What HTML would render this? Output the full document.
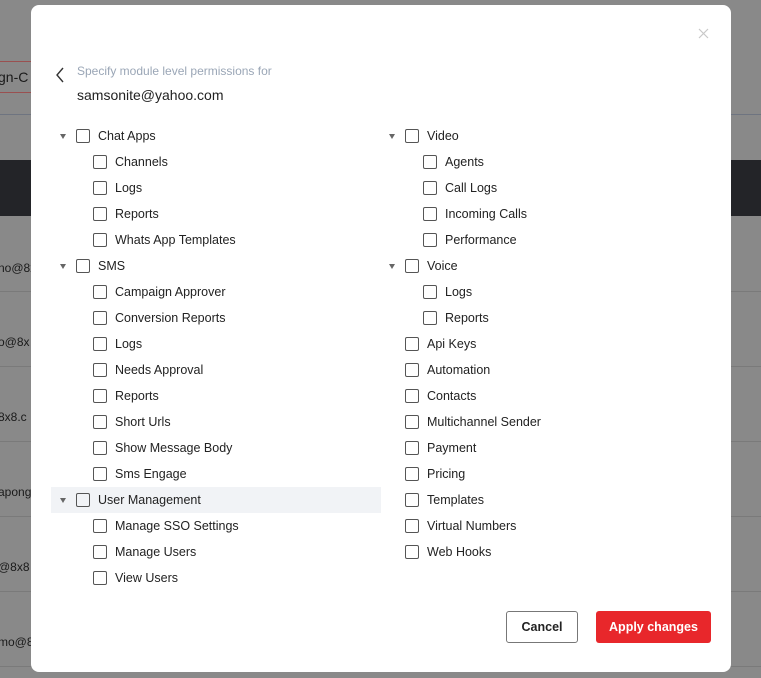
<!DOCTYPE html>
<html><head><style>
*{margin:0;padding:0;box-sizing:border-box}
body{width:761px;height:678px;background:#898989;position:relative;overflow:hidden;font-family:"Liberation Sans",sans-serif;color:#222}
.bgline{position:absolute;left:0;width:761px;height:1px;background:#7a7a7a}
.bgt{position:absolute;left:-2px;font-size:12px;color:#1a1a1a}
.modal{position:absolute;left:31px;top:5px;width:700px;height:667px;background:#fff;border-radius:8px}
.it{position:absolute;height:26px;display:flex;align-items:center;font-size:12.5px;color:#222}
.cb{width:14px;height:14px;border:1px solid #555;border-radius:2px;margin-right:8px;flex:none}
.tg{position:absolute;width:0;height:0;border-left:3.5px solid transparent;border-right:3.5px solid transparent;border-top:5px solid #666}
</style></head><body>
<div style="position:absolute;left:-5px;top:61px;width:90px;height:32px;border:1px solid #9a5050;border-left:none"></div>
<div class="bgt" style="top:69px;font-size:14px">gn-C</div>
<div class="bgline" style="top:114px;background:#6e7480"></div>
<div style="position:absolute;left:0;top:160px;width:761px;height:56px;background:#232428"></div>
<div class="bgline" style="top:291px"></div><div class="bgline" style="top:366px"></div><div class="bgline" style="top:441px"></div><div class="bgline" style="top:516px"></div><div class="bgline" style="top:591px"></div><div class="bgline" style="top:666px"></div>
<div class="bgt" style="top:261px">no@8x</div>
<div class="bgt" style="top:335px">o@8x</div>
<div class="bgt" style="top:410px">8x8.c</div>
<div class="bgt" style="top:485px">apong</div>
<div class="bgt" style="top:560px">@8x8</div>
<div class="bgt" style="top:635px">mo@8:</div>

<div class="modal">
<svg style="position:absolute;left:667px;top:23px" width="11" height="11" viewBox="0 0 11 11"><path d="M1 1L10 10M10 1L1 10" stroke="#c8c8c8" stroke-width="1.2"/></svg>
<svg style="position:absolute;left:24px;top:62px" width="10" height="16" viewBox="0 0 10 16"><path d="M8 1L2 8L8 15" fill="none" stroke="#333" stroke-width="1.4"/></svg>
<div style="position:absolute;left:46px;top:59px;font-size:12px;color:#9aa6b6">Specify module level permissions for</div>
<div style="position:absolute;left:46px;top:82px;font-size:14px;color:#222">samsonite@yahoo.com</div>
<div style="position:absolute;left:20px;top:482px;width:330px;height:26px;background:#f1f3f6"></div>
<div id="L"></div>
<div style="position:absolute;left:475px;top:606px;width:72px;height:32px;border:1px solid #777;border-radius:3px;font-size:12.5px;font-weight:bold;display:flex;align-items:center;justify-content:center;color:#222">Cancel</div>
<div style="position:absolute;left:565px;top:606px;width:115px;height:32px;background:#e8272b;border-radius:3px;font-size:12.5px;font-weight:bold;display:flex;align-items:center;justify-content:center;color:#fff">Apply changes</div>
</div>
<script>
var m=document.querySelector('.modal'),h='';
function add(x,row,t,tog){var y=118+row*26;h+='<div class="it" style="left:'+x+'px;top:'+y+'px"><span class="cb"></span>'+t+'</div>';if(tog)h+='<div class="tg" style="left:'+(x-16)+'px;top:'+(y+11)+'px"></div>';}
var L=[[1,'Chat Apps'],[0,'Channels'],[0,'Logs'],[0,'Reports'],[0,'Whats App Templates'],[1,'SMS'],[0,'Campaign Approver'],[0,'Conversion Reports'],[0,'Logs'],[0,'Needs Approval'],[0,'Reports'],[0,'Short Urls'],[0,'Show Message Body'],[0,'Sms Engage'],[1,'User Management'],[0,'Manage SSO Settings'],[0,'Manage Users'],[0,'View Users']];
L.forEach(function(a,i){add(a[0]?45:62,i,a[1],a[0])});
var R=[[1,'Video'],[0,'Agents'],[0,'Call Logs'],[0,'Incoming Calls'],[0,'Performance'],[1,'Voice'],[0,'Logs'],[0,'Reports'],[2,'Api Keys'],[2,'Automation'],[2,'Contacts'],[2,'Multichannel Sender'],[2,'Payment'],[2,'Pricing'],[2,'Templates'],[2,'Virtual Numbers'],[2,'Web Hooks']];
R.forEach(function(a,i){add(a[0]?374:392,i,a[1],a[0]==1)});
m.insertAdjacentHTML('beforeend',h);
</script>
</body></html>
